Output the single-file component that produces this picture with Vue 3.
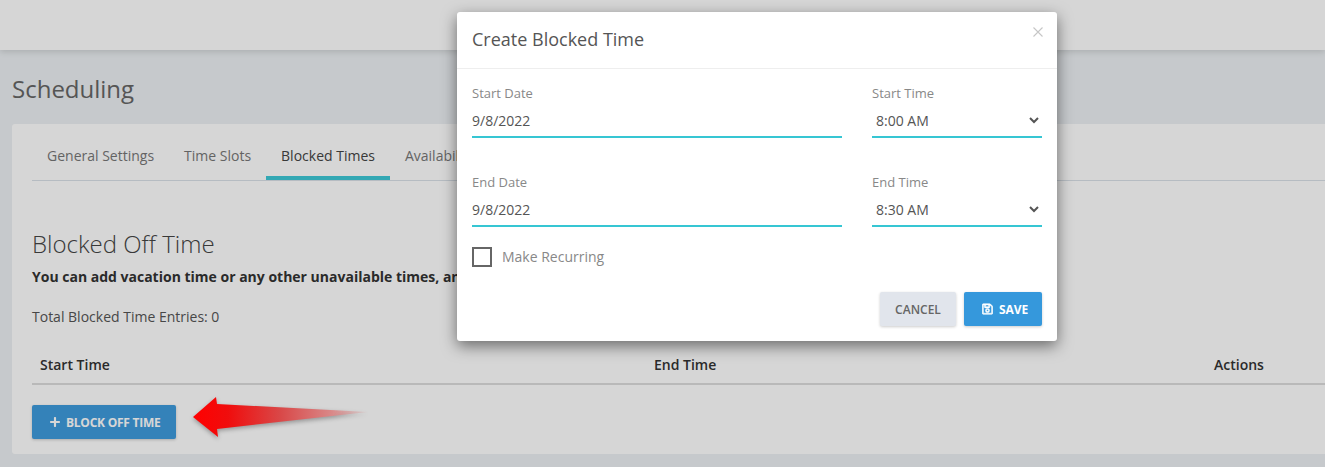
<script setup>
const tabs = [
  { label: 'General Settings' },
  { label: 'Time Slots' },
  { label: 'Blocked Times', active: true },
  { label: 'Availability' },
]
const fields = [
  { date: 'Start Date', dateValue: '9/8/2022', time: 'Start Time', timeValue: '8:00 AM' },
  { date: 'End Date', dateValue: '9/8/2022', time: 'End Time', timeValue: '8:30 AM' },
]
</script>

<template>
  <div class="page">
    <header class="topbar"></header>
    <main class="content">
      <h1 class="title">Scheduling</h1>
      <section class="card">
        <nav class="tabs">
          <a v-for="t in tabs" :key="t.label" class="tab" :class="{ active: t.active }">{{ t.label }}</a>
        </nav>
        <h2 class="sub">Blocked Off Time</h2>
        <p class="lead">You can add vacation time or any other unavailable times, and they will be blocked off.</p>
        <p class="total">Total Blocked Time Entries: 0</p>
        <div class="thead">
          <span>Start Time</span>
          <span>End Time</span>
          <span>Actions</span>
        </div>
        <button class="btn-block" type="button">
          <svg class="plus" viewBox="0 0 448 512"><path fill="currentColor" d="M416 208H272V64c0-17.67-14.33-32-32-32h-32c-17.67 0-32 14.33-32 32v144H32c-17.67 0-32 14.33-32 32v32c0 17.67 14.33 32 32 32h144v144c0 17.67 14.33 32 32 32h32c17.67 0 32-14.33 32-32V304h144c17.67 0 32-14.33 32-32v-32c0-17.67-14.33-32-32-32z"/></svg>
          BLOCK OFF TIME
        </button>
      </section>
    </main>

    <div class="backdrop">
      <div class="modal">
        <div class="modal-head">
          <h3 class="modal-title">Create Blocked Time</h3>
          <svg class="close" viewBox="0 0 10 10"><path d="M.5.5l9 9M9.5.5l-9 9" stroke="#c6c6c6" stroke-width="1.1" fill="none"/></svg>
        </div>
        <div class="modal-body">
          <div v-for="f in fields" :key="f.date" class="row">
            <label class="field">
              <span class="lbl">{{ f.date }}</span>
              <input class="ctl" type="text" :value="f.dateValue" />
            </label>
            <label class="field">
              <span class="lbl">{{ f.time }}</span>
              <select class="ctl sel"><option>{{ f.timeValue }}</option></select>
            </label>
          </div>
          <div class="check">
            <span class="box"></span>
            <span class="check-text">Make Recurring</span>
          </div>
          <div class="foot">
            <button class="btn cancel" type="button">CANCEL</button>
            <button class="btn save" type="button">
              <svg class="disk" viewBox="0 0 448 512"><path fill="currentColor" stroke="currentColor" stroke-width="24" d="M433.941 129.941l-83.882-83.882A48 48 0 0 0 316.118 32H48C21.49 32 0 53.49 0 80v352c0 26.51 21.49 48 48 48h352c26.51 0 48-21.49 48-48V163.882a48 48 0 0 0-14.059-33.941zM272 80v80H144V80h128zm122 352H54a6 6 0 0 1-6-6V86a6 6 0 0 1 6-6h42v104c0 13.255 10.745 24 24 24h176c13.255 0 24-10.745 24-24V83.882l78.243 78.243a6 6 0 0 1 1.757 4.243V426a6 6 0 0 1-6 6zM224 232c-48.523 0-88 39.477-88 88s39.477 88 88 88 88-39.477 88-88-39.477-88-88-88zm0 128c-22.056 0-40-17.944-40-40s17.944-40 40-40 40 17.944 40 40-17.944 40-40 40z"/></svg>
              SAVE
            </button>
          </div>
        </div>
      </div>
    </div>

    <svg class="arrow" viewBox="0 0 180 44" width="180" height="44">
      <defs>
        <linearGradient id="arrowFill" x1="0" y1="0" x2="1" y2="0">
          <stop offset="0" stop-color="#ff0000" />
          <stop offset="0.2" stop-color="#f00d0d" />
          <stop offset="0.5" stop-color="#d94848" />
          <stop offset="0.8" stop-color="#d98a8a" />
          <stop offset="1" stop-color="#d9a0a0" stop-opacity="0.2" />
        </linearGradient>
      </defs>
      <polygon class="arrow-shape" fill="url(#arrowFill)" points="3,22 26,2 27,9 178,17 27,34 28,42" />
    </svg>
  </div>
</template>

<style>
html, body { margin: 0; background: #ecf0f3; overflow: hidden; }
</style>

<style scoped>
.page {
  position: relative;
  width: 1325px;
  height: 467px;
  overflow: hidden;
  background: #ecf0f3;
  font-family: "Open Sans", "Liberation Sans", sans-serif;
  color: #444;
}
.topbar {
  height: 50px;
  background: #fff;
  box-shadow: 0 2px 6px rgba(0, 0, 0, .13);
  position: relative;
}
.content { padding: 0 0 0 12px; }
.title {
  margin: 0;
  height: 74px;
  line-height: 78px;
  font-size: 24px;
  font-weight: 400;
  color: #666;
}
.card {
  background: #fff;
  border-radius: 3px 0 0 3px;
  padding: 20px 0 15px 20px;
  height: 330px;
  box-sizing: border-box;
}
.tabs {
  display: flex;
  height: 36px;
  border-bottom: 1px solid #d9e0e7;
  box-sizing: content-box;
}
.tab {
  padding: 0 15px;
  height: 36px;
  box-sizing: border-box;
  line-height: 24px;
  font-size: 14px;
  color: #777;
}
.tab.active {
  color: #444;
  border-bottom: 4px solid #3dc9d7;
}
.sub {
  margin: 47px 0 0;
  font-size: 24px;
  line-height: 32px;
  font-weight: 300;
  color: #444;
}
.lead {
  margin: 0;
  padding-top: 7px;
  font-size: 14px;
  line-height: 20px;
  font-weight: 700;
  color: #333;
}
.total {
  margin: 20px 0 0;
  font-size: 14px;
  line-height: 20px;
  color: #555;
}
.thead {
  margin-top: 20px;
  display: grid;
  grid-template-columns: 614px 560px 1fr;
  height: 38px;
  line-height: 36px;
  border-bottom: 2px solid #ddd;
  box-sizing: border-box;
  font-size: 14px;
  font-weight: 600;
  color: #333;
}
.thead span { padding-left: 8px; }
.btn-block {
  margin-top: 20px;
  width: 144px;
  height: 34px;
  border: 0;
  border-radius: 2px;
  background: #3f9bdd;
  color: #fff;
  font: 700 12px "Open Sans", sans-serif;
  letter-spacing: -.25px;
  box-shadow: 0 1px 3px rgba(0, 0, 0, .2);
  display: flex;
  align-items: center;
  justify-content: flex-start;
  gap: 6px;
  padding: 0 0 0 18px;
}
.plus { width: 10px; height: 12px; }

.backdrop {
  position: absolute;
  inset: 0;
  background: rgba(0, 0, 0, .16);
}
.modal {
  position: absolute;
  left: 457px;
  top: 12px;
  width: 600px;
  height: 329px;
  background: #fff;
  border-radius: 3px;
  box-shadow: 0 5px 15px rgba(0, 0, 0, .5);
}
.modal-head {
  position: relative;
  height: 56px;
  box-sizing: content-box;
  border-bottom: 1px solid #eee;
  padding-left: 15px;
}
.modal-title {
  margin: 0;
  line-height: 54px;
  font-size: 18px;
  font-weight: 400;
  color: #555;
}
.close {
  position: absolute;
  right: 14.5px;
  top: 14.5px;
  width: 10px;
  height: 10px;
}
.modal-body { padding: 15px 15px 15px; }
.row {
  display: grid;
  grid-template-columns: 370px 170px;
  column-gap: 30px;
  margin-bottom: 35px;
}
.row:nth-child(2) { margin-bottom: 20px; }
.field { display: flex; flex-direction: column; }
.lbl {
  font-size: 13px;
  line-height: 18px;
  color: #888;
}
.ctl {
  height: 36px;
  margin: 0;
  padding: 2px 0 0;
  border: 0;
  border-bottom: 2px solid #36c6d3;
  background: transparent;
  font: 14px "Open Sans", sans-serif;
  color: #555;
  outline: none;
  box-sizing: border-box;
  width: 100%;
}
.check {
  display: flex;
  align-items: center;
  height: 20px;
  gap: 10px;
}
.box {
  width: 20px;
  height: 20px;
  box-sizing: border-box;
  border: 2px solid #666;
}
.check-text { font-size: 14px; color: #888; padding-bottom: 2px; }
.foot {
  margin-top: 25px;
  display: flex;
  justify-content: flex-end;
  gap: 8px;
}
.btn {
  height: 34px;
  border: 0;
  border-radius: 2px;
  padding: 0;
  font: 600 12px "Open Sans", sans-serif;
  box-shadow: 0 1px 3px rgba(0, 0, 0, .2);
  display: flex;
  align-items: center;
  justify-content: center;
  gap: 5px;
}
.cancel { width: 76px; background: #e1e5ec; color: #666; }
.save {
  width: 78px;
  background: #3598dc;
  color: #fff;
  font-weight: 700;
  justify-content: flex-start;
  padding-left: 18px;
  gap: 6px;
  letter-spacing: -.1px;
}
.disk { width: 11px; height: 12px; }

.arrow {
  position: absolute;
  left: 190px;
  top: 395px;
  overflow: visible;
}
.arrow-shape { filter: drop-shadow(0 2px 2px rgba(0, 0, 0, .3)); }
</style>
